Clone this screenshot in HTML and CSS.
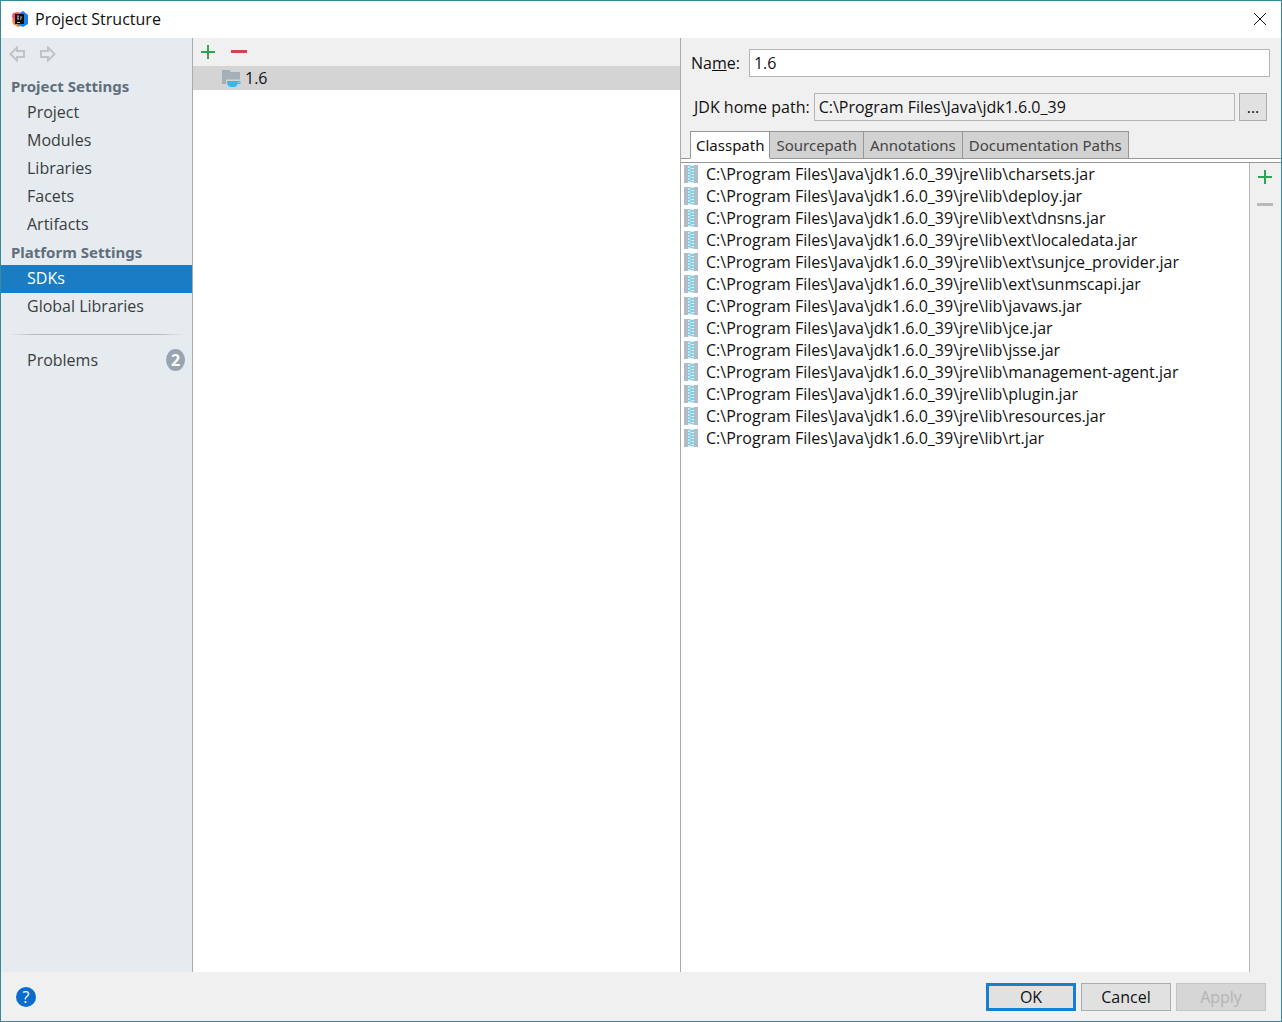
FILE: index.html
```html
<!DOCTYPE html>
<html lang="en">
<head>
<meta charset="utf-8">
<meta name="viewport" content="width=device-width, initial-scale=1">
<title>Project Structure</title>
<link rel="stylesheet" href="styles.css">
</head>
<body>
<svg class="defs" aria-hidden="true">
  <symbol id="jar" viewBox="0 0 14 20">
    <path d="M0 1h4v18H0zM10 1h4v18h-4z" fill="#b3bcc4"/>
    <path d="M4 1h6v18H4z" fill="#e2f2f7"/>
    <path d="M4 1.500l6 1.500-6 1.500 6 1.500-6 1.500 6 1.500-6 1.500 6 1.500-6 1.500 6 1.500-6 1.500 6 1.500" stroke="#6cc8e6" fill="none"/>
  </symbol>
  <symbol id="plus" viewBox="0 0 16 16"><path d="M8 1v14M1 8h14" stroke="#2fa352" stroke-width="2"/></symbol>
  <symbol id="minus" viewBox="0 0 16 16"><path d="M0 7.500h16" stroke="currentColor" stroke-width="3"/></symbol>
</svg>
<div class="window">
  <header class="titlebar">
    <svg class="logo" viewBox="0 0 16 16" aria-hidden="true">
      <path d="M1 2l5-1 3 3-2 8-6-2-1-5z" fill="#f0506c"/>
      <path d="M0 9l4-2 5 8-3 1-5-3z" fill="#f78a32"/>
      <path d="M8 2l3-2 5 4v9l-5 3-5-2z" fill="#1681e8"/>
      <path d="M7 1l4 2-2 3z" fill="#a64bc4"/>
      <path d="M3 3h9v10H3z" fill="#111"/>
      <path d="M5 5h2M6 5v3M5 8h2M9 5v3H8M5 11.500h3" stroke="#bbb" fill="none"/>
    </svg>
    <h1 class="title">Project Structure</h1>
    <button class="icon-button" aria-label="Close"><svg class="close" viewBox="0 0 12 12"><path d="M0 0l12 12M12 0L0 12" stroke="#111" fill="none"/></svg></button>
  </header>
  <main class="content">
    <nav class="sidebar">
      <div class="history">
        <button class="icon-button" aria-label="Back"><svg class="arrow" viewBox="0 0 16 16"><path d="M1.500 8L8 1.500V5h7v6H8v3.500z" fill="none" stroke="#c2c3c4" stroke-width="2"/></svg></button>
        <button class="icon-button" aria-label="Forward"><svg class="arrow" viewBox="0 0 16 16"><path d="M14.500 8L8 1.500V5H1v6h7v3.500z" fill="none" stroke="#c2c3c4" stroke-width="2"/></svg></button>
      </div>
      <h2 class="group">Project Settings</h2>
      <a class="item" href="#">Project</a>
      <a class="item" href="#">Modules</a>
      <a class="item" href="#">Libraries</a>
      <a class="item" href="#">Facets</a>
      <a class="item" href="#">Artifacts</a>
      <h2 class="group">Platform Settings</h2>
      <a class="item selected" href="#" aria-current="page">SDKs</a>
      <a class="item" href="#">Global Libraries</a>
      <div class="separator"></div>
      <a class="item" href="#">Problems <span class="badge">2</span></a>
    </nav>
    <section class="sdks">
      <div class="toolbar">
        <button class="icon-button" aria-label="Add SDK"><svg class="icon"><use href="#plus"/></svg></button>
        <button class="icon-button remove" aria-label="Remove SDK"><svg class="icon"><use href="#minus"/></svg></button>
      </div>
      <div class="sdk">
        <svg class="folder" viewBox="0 0 20 18" aria-hidden="true">
          <path d="M1 1h7l2 2h9v12H1z" fill="#a5afb7"/>
          <path d="M5 10.500h15v4h-3l-2 3H8l-3-2z" fill="#d4d4d4"/>
          <path d="M6 12h11c0 4-2 6-4 6h-3c-3 0-4-3-4-6z" fill="#40b6e8"/>
          <path d="M16 12.500h3v2h-3" fill="none" stroke="#40b6e8"/>
        </svg>
        <span>1.6</span>
      </div>
    </section>
    <section class="details">
      <div class="field name-field">
        <label for="name">Na<u>m</u>e:</label>
        <input class="text" id="name" type="text" value="1.6">
      </div>
      <div class="field path-field">
        <label for="home">JDK home path:</label>
        <input class="text readonly" id="home" type="text" value="C:\Program Files\Java\jdk1.6.0_39" readonly>
        <button class="browse" aria-label="Browse">...</button>
      </div>
      <div class="tabs" role="tablist">
        <button class="tab active" role="tab" aria-selected="true">Classpath</button>
        <button class="tab" role="tab">Sourcepath</button>
        <button class="tab" role="tab">Annotations</button>
        <button class="tab" role="tab">Documentation Paths</button>
      </div>
      <div class="panel">
        <ul class="jars">
          <li><svg class="jar"><use href="#jar"/></svg>C:\Program Files\Java\jdk1.6.0_39\jre\lib\charsets.jar</li>
          <li><svg class="jar"><use href="#jar"/></svg>C:\Program Files\Java\jdk1.6.0_39\jre\lib\deploy.jar</li>
          <li><svg class="jar"><use href="#jar"/></svg>C:\Program Files\Java\jdk1.6.0_39\jre\lib\ext\dnsns.jar</li>
          <li><svg class="jar"><use href="#jar"/></svg>C:\Program Files\Java\jdk1.6.0_39\jre\lib\ext\localedata.jar</li>
          <li><svg class="jar"><use href="#jar"/></svg>C:\Program Files\Java\jdk1.6.0_39\jre\lib\ext\sunjce_provider.jar</li>
          <li><svg class="jar"><use href="#jar"/></svg>C:\Program Files\Java\jdk1.6.0_39\jre\lib\ext\sunmscapi.jar</li>
          <li><svg class="jar"><use href="#jar"/></svg>C:\Program Files\Java\jdk1.6.0_39\jre\lib\javaws.jar</li>
          <li><svg class="jar"><use href="#jar"/></svg>C:\Program Files\Java\jdk1.6.0_39\jre\lib\jce.jar</li>
          <li><svg class="jar"><use href="#jar"/></svg>C:\Program Files\Java\jdk1.6.0_39\jre\lib\jsse.jar</li>
          <li><svg class="jar"><use href="#jar"/></svg>C:\Program Files\Java\jdk1.6.0_39\jre\lib\management-agent.jar</li>
          <li><svg class="jar"><use href="#jar"/></svg>C:\Program Files\Java\jdk1.6.0_39\jre\lib\plugin.jar</li>
          <li><svg class="jar"><use href="#jar"/></svg>C:\Program Files\Java\jdk1.6.0_39\jre\lib\resources.jar</li>
          <li><svg class="jar"><use href="#jar"/></svg>C:\Program Files\Java\jdk1.6.0_39\jre\lib\rt.jar</li>
        </ul>
        <div class="side-tools">
          <button class="icon-button" aria-label="Add path"><svg class="icon"><use href="#plus"/></svg></button>
          <button class="icon-button off" aria-label="Remove path" disabled><svg class="icon"><use href="#minus"/></svg></button>
        </div>
      </div>
    </section>
  </main>
  <footer class="footer">
    <button class="help" aria-label="Help">?</button>
    <button class="action primary">OK</button>
    <button class="action">Cancel</button>
    <button class="action" disabled>Apply</button>
  </footer>
</div>
</body>
</html>
```
FILE: styles.css
```css
* { box-sizing: border-box; }
body {
  margin: 0;
  font: 16px/22px "Open Sans", "Noto Sans", sans-serif;
  color: #111;
}
button, input { font: inherit; color: inherit; }
svg { display: block; flex: none; }
.defs { display: none; }

.window {
  display: flex;
  flex-direction: column;
  min-height: 100vh;
  border: 1px solid #38899a;
  background: #f0f0f0;
}
.titlebar {
  display: flex;
  align-items: center;
  height: 37px;
  padding: 0 15px 1px 11px;
  background: #fff;
}
.logo { width: 16px; height: 16px; }
.title { flex: 1; margin: 0 0 0 7px; font-size: 16px; font-weight: 400; }
.close { width: 12px; height: 12px; }
.icon-button {
  display: block;
  padding: 0;
  border: 0;
  background: none;
}
.icon { width: 16px; height: 16px; }

.content {
  display: grid;
  grid-template-columns: 192px 488fr 600fr;
  flex: 1;
}

.sidebar { border-right: 1px solid #a9acae; background: #e6ebef; }
.history { display: flex; align-items: flex-start; gap: 15px; height: 35px; padding: 8px; }
.arrow { width: 16px; height: 16px; }
.group {
  margin: 0;
  padding: 1px 0 0 10px;
  font-family: "Noto Sans", "Open Sans", sans-serif;
  font-size: 15px;
  font-weight: 700;
  line-height: 25px;
  color: #616e7c;
}
.item {
  display: flex;
  align-items: center;
  justify-content: space-between;
  height: 28px;
  padding: 0 7px 2px 26px;
  color: #3a3d40;
  text-decoration: none;
}
.item.selected { background: #1a7dc4; color: #fff; }
.separator {
  height: 1px;
  margin: 13px 8px 12px;
  background: linear-gradient(90deg, #e6ebef, #b3b8bc 15%, #b3b8bc 85%, #e6ebef);
}
.badge {
  width: 19px;
  height: 22px;
  border-radius: 50%;
  background: #98a4b0;
  color: #fff;
  font-weight: 700;
  text-align: center;
}

.sdks { border-right: 1px solid #a9a9a9; background: #fff; }
.toolbar {
  display: flex;
  gap: 15px;
  height: 28px;
  padding: 6px 7px;
  background: #f0f0f0;
}
.remove { color: #c7484d; }
.sdk {
  display: flex;
  align-items: center;
  gap: 4px;
  height: 24px;
  padding-left: 28px;
  background: #d4d4d4;
}
.folder { width: 20px; height: 18px; }

.details { display: flex; flex-direction: column; min-width: 0; }
.field { display: flex; align-items: center; }
.name-field { gap: 9px; padding: 11px 11px 0 10px; }
.path-field { gap: 4px; padding: 16px 14px 10px 13px; }
.path-field label { white-space: nowrap; }
.text {
  flex: 1;
  min-width: 0;
  height: 28px;
  padding: 0 4px;
  border: 1px solid #b5b5b5;
  background: #fff;
}
.text.readonly { background: #f0f0f0; }
.browse {
  width: 28px;
  height: 28px;
  padding: 0;
  border: 1px solid #adadad;
  background: #e1e1e1;
}
.tabs {
  display: flex;
  height: 28px;
  padding-left: 9px;
  box-shadow: inset 0 -1px #979797;
}
.tab {
  padding: 0 6px;
  border: 1px solid #979797;
  border-left-width: 0;
  background: #d2d2d2;
  color: #444;
  font-family: "Noto Sans", "Open Sans", sans-serif;
  font-size: 15px;
  white-space: nowrap;
}
.tab.active {
  padding: 0 5px;
  border-left-width: 1px;
  border-bottom-color: #fff;
  background: #fff;
  color: #111;
}
.panel {
  display: flex;
  flex: 1;
  border-top: 1px solid #979797;
  margin-top: 3px;
  box-shadow: 0 -3px #fff;
}
.jars {
  flex: 1;
  margin: 0;
  padding: 0;
  list-style: none;
  background: #fff;
}
.jars li { display: flex; align-items: center; gap: 8px; height: 22px; padding-left: 3px; }
.jar { width: 14px; height: 20px; }
.side-tools {
  display: flex;
  flex-direction: column;
  gap: 12px;
  width: 32px;
  padding: 6px 7px;
  border-left: 1px solid #b5b5b5;
}
.off { color: #b9b9b9; }

.footer {
  display: flex;
  align-items: center;
  gap: 5px;
  height: 49px;
  padding: 0 15px;
}
.help {
  width: 20px;
  height: 20px;
  margin-right: auto;
  padding: 0;
  border: 0;
  border-radius: 50%;
  background: #0a6ccc;
  color: #fff;
  line-height: 20px;
}
.action {
  width: 90px;
  height: 28px;
  padding: 0;
  border: 1px solid #adadad;
  background: #e1e1e1;
}
.action.primary { border: 3px solid #1580d0; }
.action:disabled { border-color: #c4c4c4; background: #d6d6d6; color: #b4b4b4; }
```
